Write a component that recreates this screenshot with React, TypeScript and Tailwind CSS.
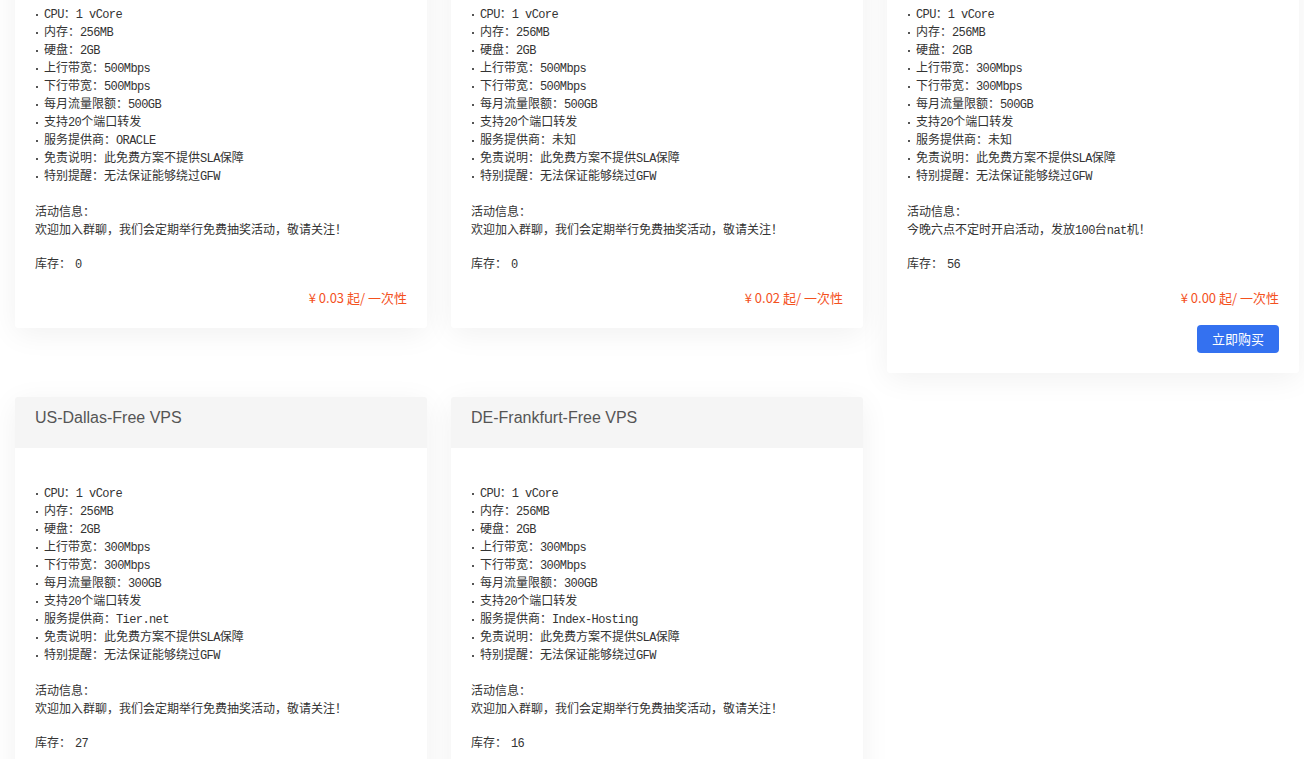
import React from 'react';

type Plan = {
  title: string;
  up: string;
  down: string;
  traffic: string;
  provider: string;
  activity: string;
  stock: number;
  price: string;
  buy: boolean;
};

const plans: Plan[] = [
  { title: 'US-Phoenix-Free VPS', up: '500Mbps', down: '500Mbps', traffic: '500GB', provider: 'ORACLE', activity: '欢迎加入群聊，我们会定期举行免费抽奖活动，敬请关注！', stock: 0, price: '0.03', buy: false },
  { title: 'JP-Tokyo-Free VPS', up: '500Mbps', down: '500Mbps', traffic: '500GB', provider: '未知', activity: '欢迎加入群聊，我们会定期举行免费抽奖活动，敬请关注！', stock: 0, price: '0.02', buy: false },
  { title: 'HK-Free NAT VPS', up: '300Mbps', down: '300Mbps', traffic: '500GB', provider: '未知', activity: '今晚六点不定时开启活动，发放100台nat机！', stock: 56, price: '0.00', buy: true },
  { title: 'US-Dallas-Free VPS', up: '300Mbps', down: '300Mbps', traffic: '300GB', provider: 'Tier.net', activity: '欢迎加入群聊，我们会定期举行免费抽奖活动，敬请关注！', stock: 27, price: '0.00', buy: true },
  { title: 'DE-Frankfurt-Free VPS', up: '300Mbps', down: '300Mbps', traffic: '300GB', provider: 'Index-Hosting', activity: '欢迎加入群聊，我们会定期举行免费抽奖活动，敬请关注！', stock: 16, price: '0.00', buy: true },
];

// ascii runs get a tighter mono advance (consolas-like), CJK stays as is
const Mixed: React.FC<{ text: string }> = ({ text }) => {
  const parts = text.match(/[\x20-\x7e]+|[^\x20-\x7e]+/g) || [];
  return (
    <>
      {parts.map((p, i) =>
        /^[\x20-\x7e]+$/.test(p) ? (
          <span key={i} className="tracking-[-0.6px] whitespace-pre">{p}</span>
        ) : (
          <span key={i}>{p}</span>
        )
      )}
    </>
  );
};

const Spec: React.FC<{ text: string }> = ({ text }) => (
  <div className="flex items-center h-[18px]">
    <span className="w-[2px] h-[2px] bg-[#555] ml-[1px] mr-[6px]"></span>
    <Mixed text={text} />
  </div>
);

const Card: React.FC<{ plan: Plan }> = ({ plan }) => {
  const specs = [
    'CPU：1 vCore',
    '内存：256MB',
    '硬盘：2GB',
    `上行带宽：${plan.up}`,
    `下行带宽：${plan.down}`,
    `每月流量限额：${plan.traffic}`,
    '支持20个端口转发',
    `服务提供商：${plan.provider}`,
    '免责说明：此免费方案不提供SLA保障',
    '特别提醒：无法保证能够绕过GFW',
  ];
  return (
    <div className="w-[412px] bg-white rounded-[3px] overflow-hidden shadow-[0_6px_30px_rgba(0,0,0,0.06)]">
      <div className="h-[51px] bg-[#f5f5f5] px-5 pt-[11px] leading-5 text-[16px] text-[#555] font-['Liberation_Sans',Arial,sans-serif]">
        {plan.title}
      </div>
      <div className="px-5 pt-[37px] pb-5 text-[12px] leading-[18px] text-[#333] font-['Liberation_Mono','Noto_Sans_CJK_SC',monospace]">
        {specs.map((s) => (
          <Spec key={s} text={s} />
        ))}
        <div className="mt-[18px]">活动信息：</div>
        <div>
          <Mixed text={plan.activity} />
        </div>
        <div className="mt-4 flex">
          <span>库存：</span>
          <span className="ml-1 tracking-[-0.6px]">{plan.stock}</span>
        </div>
        <div className="mt-[14px] text-right text-[13px] leading-5 text-[#f4511e] font-['Noto_Sans_CJK_SC','Liberation_Sans',sans-serif]">
          ¥ {plan.price} 起/ 一次性
        </div>
        {plan.buy && (
          <div className="flex justify-end mt-[17px]">
            <button className="w-[82px] h-7 rounded-[4px] bg-[#3471f0] text-white text-[13px] font-['Noto_Sans_CJK_SC',sans-serif]">
              立即购买
            </button>
          </div>
        )}
      </div>
    </div>
  );
};

export default function App() {
  return (
    <div className="min-h-screen bg-white overflow-hidden">
      <div className="-mt-[82px] pl-[15px] flex flex-wrap items-start gap-6 pb-10">
        {plans.map((p) => (
          <Card key={p.title} plan={p} />
        ))}
      </div>
    </div>
  );
}
